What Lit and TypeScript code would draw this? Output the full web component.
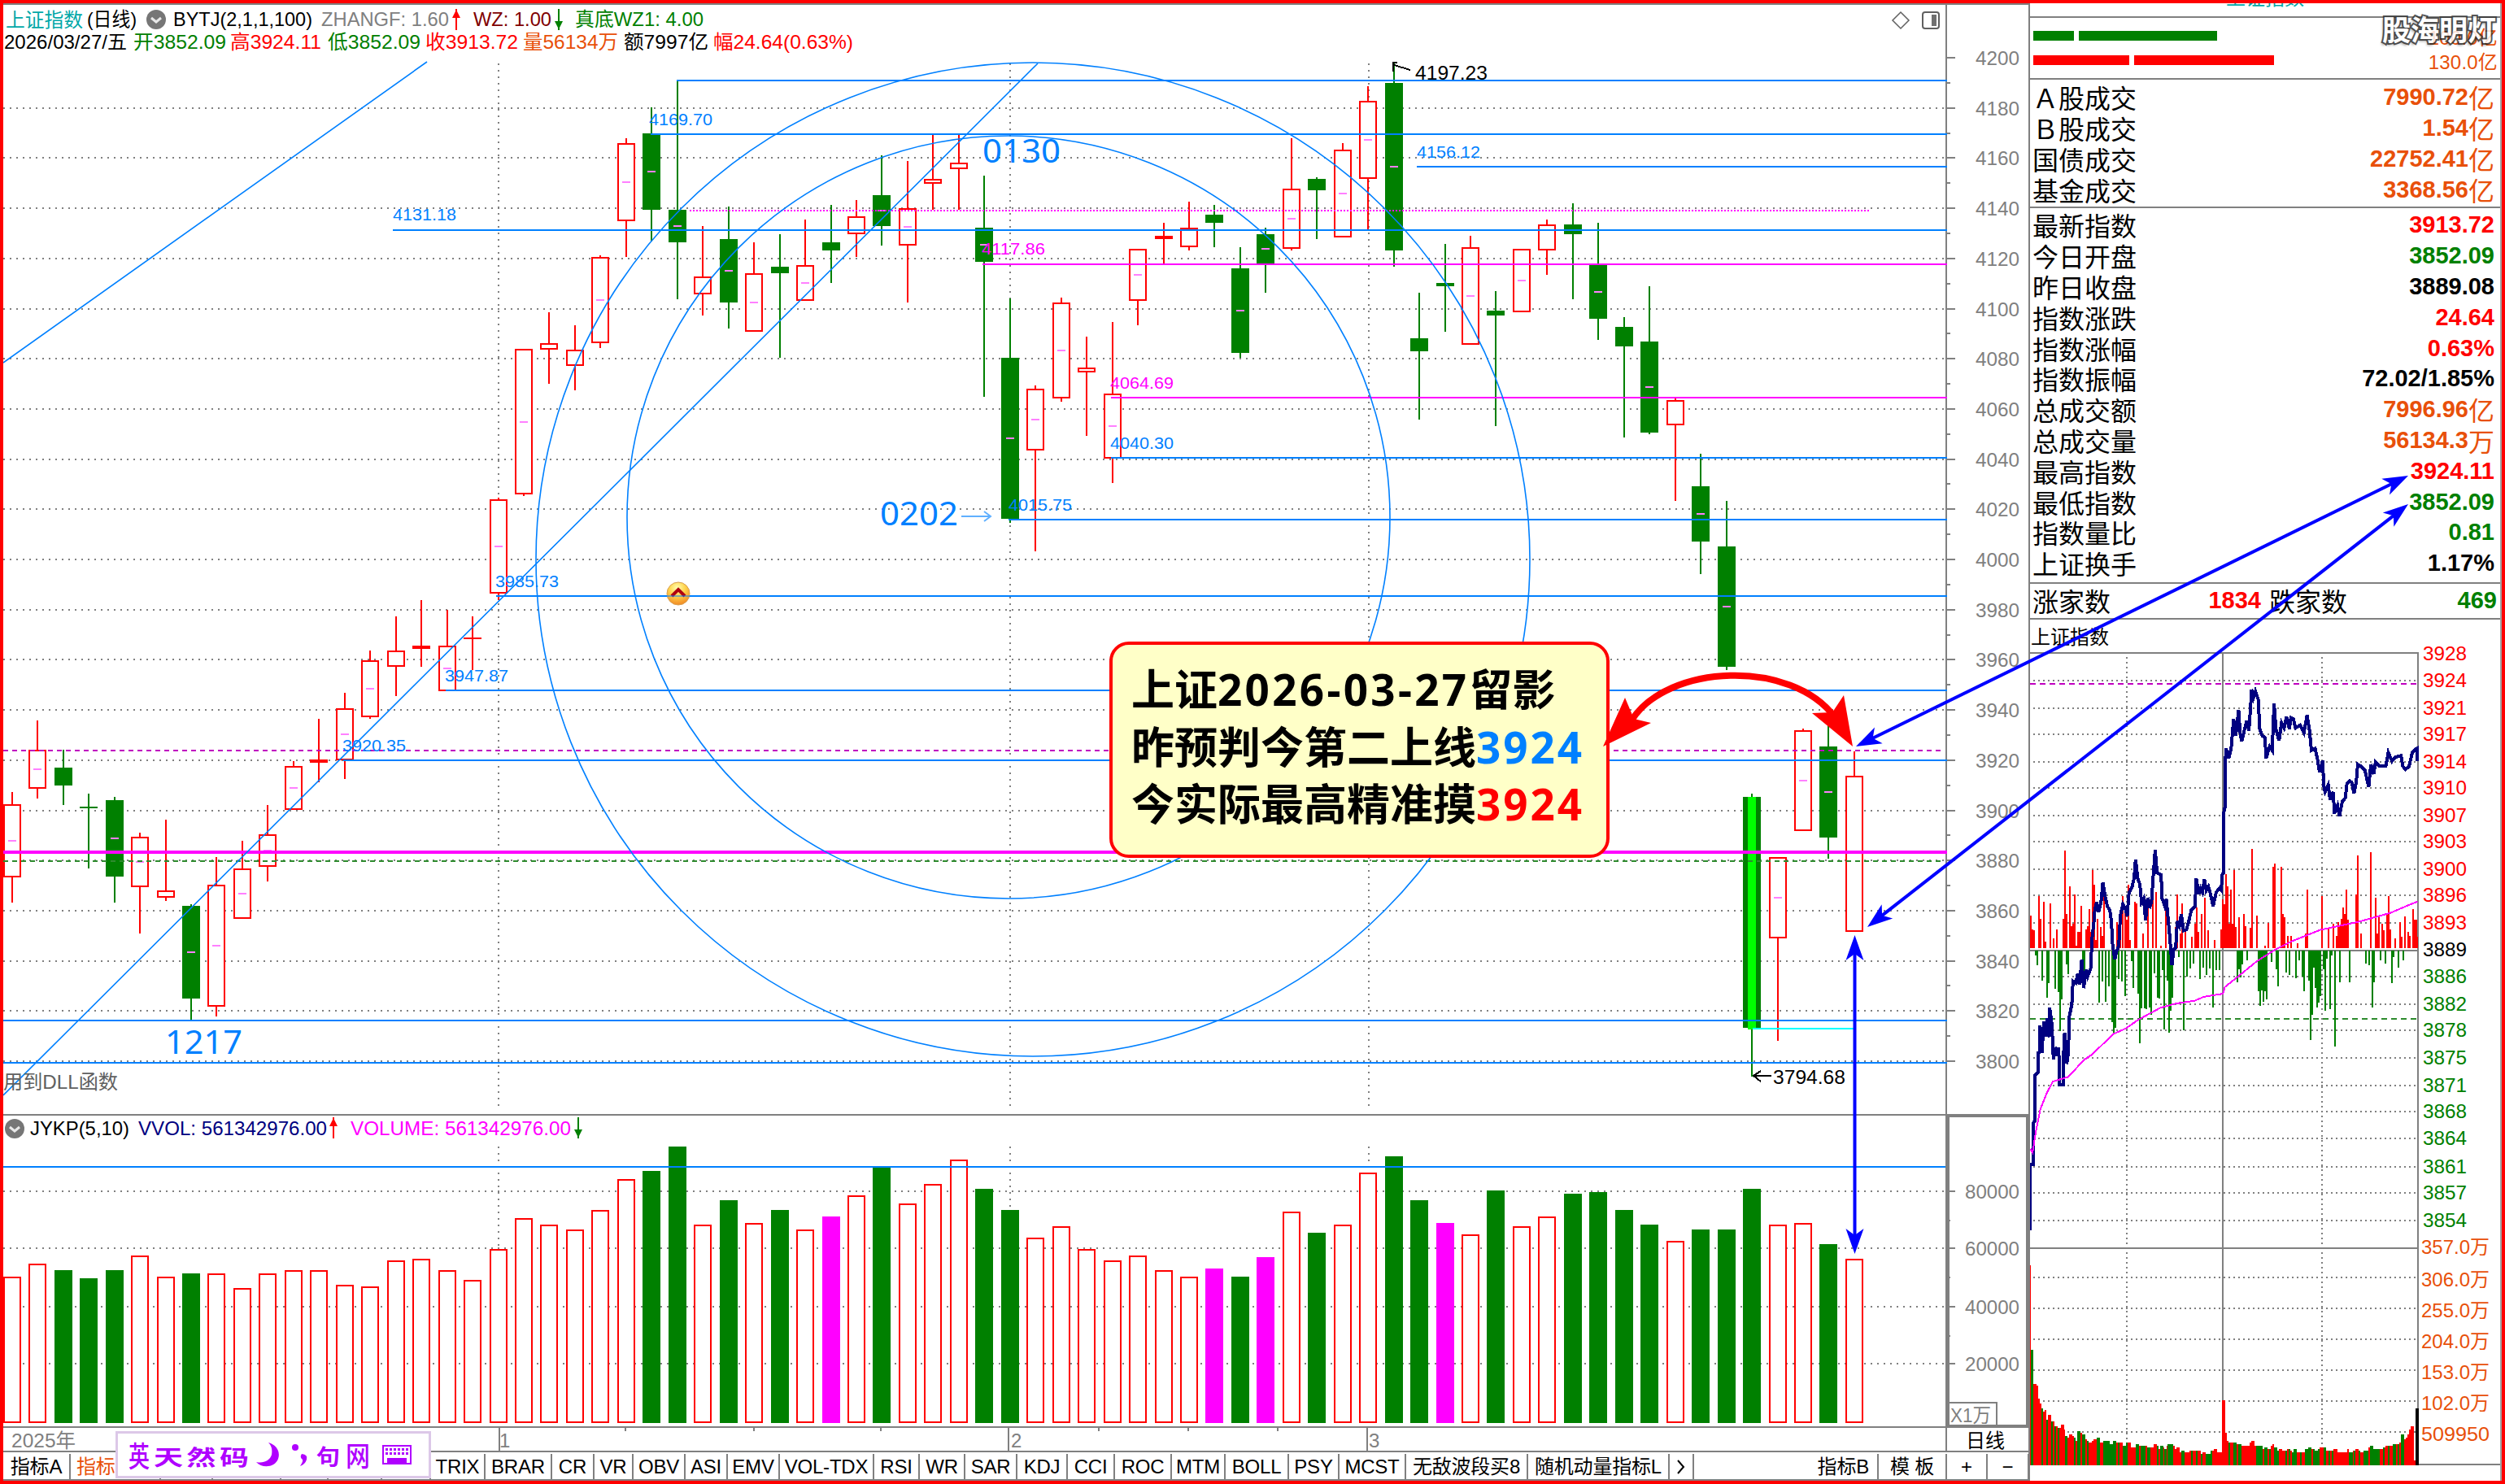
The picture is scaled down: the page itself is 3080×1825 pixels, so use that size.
import { LitElement, css, html, svg } from "lit";
import { customElement } from "lit/decorators.js";

type Candle = [top: number, bottom: number, high: number, low: number, kind: string];
type Bar = [top: number, kind: string];
type Point = [x: number, y: number];

const RED = "#ff0000";
const GREEN = "#008000";
const BLUE = "#0080ff";
const PINK = "#ff00ff";
const GRAY = "#808080";
const COLORS: Record<string, string> = { R: RED, G: GREEN, M: PINK };

const FIRST_X = 15.3;
const PITCH = 31.46;

// candle body top/bottom, wick high/low; R = up, G = down, L = marked down day
const CANDLES: Candle[] = [
  [989, 1079, 974, 1110, "R"], [922, 970, 886, 982, "R"], [944, 966, 922, 990, "G"],
  [992, 994, 976, 1068, "G"], [984, 1078, 980, 1110, "G"], [1029, 1091, 1024, 1148, "R"],
  [1095, 1104, 1008, 1108, "R"], [1114, 1228, 1112, 1254, "G"], [1088, 1238, 1054, 1250, "R"],
  [1068, 1130, 1034, 1130, "R"], [1026, 1066, 990, 1084, "R"], [942, 996, 936, 996, "R"],
  [934, 938, 884, 962, "R"], [871, 935, 852, 958, "R"], [812, 882, 800, 884, "R"],
  [800, 820, 758, 856, "R"], [794, 798, 738, 820, "R"], [794, 850, 750, 850, "R"],
  [784, 786, 758, 824, "R"], [614, 730, 612, 738, "R"], [429, 608, 429, 610, "R"],
  [422, 430, 384, 472, "R"], [430, 450, 400, 480, "R"], [316, 422, 314, 428, "R"],
  [176, 272, 170, 316, "R"], [164, 258, 132, 297, "G"], [258, 298, 99, 368, "G"],
  [340, 362, 278, 388, "R"], [294, 372, 254, 404, "G"], [336, 408, 298, 408, "R"],
  [328, 336, 288, 440, "G"], [326, 370, 270, 370, "R"], [298, 308, 252, 348, "G"],
  [266, 288, 246, 316, "R"], [240, 278, 191, 302, "G"], [256, 302, 198, 372, "R"],
  [220, 226, 165, 258, "R"], [200, 208, 165, 258, "R"], [280, 322, 216, 488, "G"],
  [440, 638, 367, 643, "G"], [478, 554, 474, 678, "R"], [372, 490, 366, 494, "R"],
  [452, 458, 414, 536, "R"], [484, 564, 396, 594, "R"], [306, 370, 306, 400, "R"],
  [290, 294, 274, 325, "R"], [280, 304, 248, 308, "R"], [264, 274, 252, 304, "G"],
  [330, 434, 304, 440, "G"], [288, 324, 280, 360, "G"], [232, 306, 170, 308, "R"],
  [220, 234, 218, 294, "G"], [184, 292, 176, 292, "R"], [124, 220, 106, 283, "R"],
  [102, 308, 78, 328, "G"], [416, 432, 360, 516, "G"], [348, 352, 300, 408, "G"],
  [304, 424, 290, 424, "R"], [382, 388, 358, 524, "G"], [306, 384, 306, 384, "R"],
  [276, 308, 270, 338, "R"], [276, 288, 250, 368, "G"], [325, 392, 274, 418, "G"],
  [402, 426, 390, 538, "G"], [420, 532, 352, 534, "G"], [492, 523, 489, 616, "R"],
  [598, 666, 558, 706, "G"], [672, 820, 616, 824, "G"], [980, 1264, 976, 1324, "L"],
  [1054, 1154, 1054, 1280, "R"], [898, 1022, 896, 1022, "R"], [918, 1030, 889, 1056, "G"],
  [954, 1146, 924, 1146, "N"],
];

const VOLUMES: Bar[] = [
  [1570, "R"], [1554, "R"], [1562, "G"], [1572, "G"], [1562, "G"], [1544, "R"], [1570, "R"],
  [1566, "G"], [1566, "R"], [1584, "R"], [1566, "R"], [1562, "R"], [1562, "R"], [1580, "R"],
  [1582, "R"], [1550, "R"], [1548, "R"], [1562, "R"], [1574, "R"], [1536, "R"], [1498, "R"],
  [1506, "R"], [1512, "R"], [1488, "R"], [1450, "R"], [1440, "G"], [1410, "G"], [1506, "R"],
  [1476, "G"], [1504, "R"], [1488, "G"], [1512, "R"], [1496, "M"], [1470, "R"], [1436, "G"],
  [1480, "R"], [1456, "R"], [1426, "R"], [1462, "G"], [1488, "G"], [1522, "R"], [1508, "R"],
  [1536, "R"], [1550, "R"], [1544, "R"], [1562, "R"], [1570, "R"], [1560, "M"], [1570, "G"],
  [1546, "M"], [1490, "R"], [1516, "G"], [1506, "R"], [1442, "R"], [1422, "G"], [1476, "G"],
  [1504, "M"], [1518, "R"], [1464, "G"], [1508, "R"], [1496, "R"], [1468, "G"], [1466, "G"],
  [1488, "G"], [1506, "G"], [1526, "R"], [1512, "G"], [1512, "G"], [1462, "G"], [1506, "R"],
  [1504, "R"], [1530, "G"], [1548, "R"],
];

// label, left edge of the tab
const TABS: [string, number, string?][] = [
  ["指标A", 4], ["指标", 87, "hot"], ["", 198], ["", 262], ["", 346], ["", 404],
  ["", 470], ["TRIX", 530], ["BRAR", 597], ["CR", 679], ["VR", 731], ["OBV", 779],
  ["ASI", 843], ["EMV", 895], ["VOL-TDX", 959], ["RSI", 1075], ["WR", 1131], ["SAR", 1187],
  ["KDJ", 1251], ["CCI", 1313], ["ROC", 1371], ["MTM", 1441], ["BOLL", 1507], ["PSY", 1585],
  ["MCST", 1647], ["无敌波段买8", 1729], ["随机动量指标L", 1879], ["", 2053, "more"],
  ["指标B", 2083, "end"], ["模 板", 2310], ["+", 2394], ["−", 2444],
];
const TABS_END = 2495;

const TURNOVER: [string, string, string][] = [
  ["Ａ股成交", "7990.72", "亿"], ["Ｂ股成交", "1.54", "亿"],
  ["国债成交", "22752.41", "亿"], ["基金成交", "3368.56", "亿"],
];

const QUOTES: [string, string, string, string?][] = [
  ["最新指数", "3913.72", "up"], ["今日开盘", "3852.09", "down"], ["昨日收盘", "3889.08", ""],
  ["指数涨跌", "24.64", "up"], ["指数涨幅", "0.63%", "up"], ["指数振幅", "72.02/1.85%", ""],
  ["总成交额", "7996.96", "amount", "亿"], ["总成交量", "56134.3", "amount", "万"],
  ["最高指数", "3924.11", "up"], ["最低指数", "3852.09", "down"],
  ["指数量比", "0.81", "down"], ["上证换手", "1.17%", ""],
];

const INTRADAY_AXIS: [number, number][] = [
  [3928, 804], [3924, 837], [3921, 871], [3917, 903], [3914, 937], [3910, 969], [3907, 1003],
  [3903, 1035], [3900, 1069], [3896, 1101], [3893, 1135], [3889, 1168], [3886, 1201],
  [3882, 1235], [3878, 1267], [3875, 1301], [3871, 1335], [3868, 1367], [3864, 1400],
  [3861, 1435], [3857, 1467], [3854, 1501],
];

const INTRADAY_VOL_AXIS: [string, number][] = [
  ["357.0万", 1533], ["306.0万", 1573], ["255.0万", 1611], ["204.0万", 1649],
  ["153.0万", 1687], ["102.0万", 1725], ["509950", 1763],
];

const parse = (s: string): Point[] =>
  s.trim().split(/\s+/).map((p) => p.split(",").map(Number) as Point);

// intraday series are kept in their own units and scaled in one group
const INTRADAY_SCALE = "translate(2480 780) scale(0.38265 0.4847)";

const PRICE_LINE = `43,1512 43,1345 52,1345 52,1240 57,1235 57,1120 67,1112 68,1062 74,1060 74,992 80,1062
  86,982 95,1020 97,975 104,1022 105,948 112,990 117,1078 124,1048 132,1070 134,1048 137,1143 148,1143
  148,1095 153,1012 160,1090 165,1060 168,970 176,940 180,880 190,885 194,862 202,888 205,855 208,825
  214,898 222,850 227,868 238,845 240,780 247,730 250,700 256,680 262,705 270,680 276,630 282,660
  290,690 298,700 303,725 307,785 314,825 320,805 327,790 332,715 340,685 348,695 354,715 360,655
  370,640 376,620 381,572 388,620 395,635 400,680 407,670 413,725 420,668 425,695 432,680 437,622
  444,547 450,605 463,610 466,670 475,690 480,672 484,710 490,760 498,840 503,800 510,795 515,728
  522,740 528,710 535,752 544,750 552,728 560,700 572,690 576,620 584,660 590,645 596,655 602,622
  608,650 615,640 622,660 630,690 640,655 650,645 656,650 660,608 664,605 665,450 668,440 669,325
  672,290 680,315 688,290 696,215 703,258 712,192 717,250 722,272 730,245 738,220 745,245 750,190
  754,140 760,160 766,145 775,165 780,240 788,258 797,262 800,315 812,285 820,295 826,175 832,240
  842,270 850,225 858,238 866,210 875,240 880,212 888,215 895,238 910,230 922,250 932,205 940,245
  946,295 958,290 965,315 972,350 982,320 986,385 990,400 1000,383 1006,420 1016,400 1020,455
  1030,435 1036,462 1045,425 1055,415 1060,380 1068,372 1075,375 1083,403 1090,375 1095,330
  1105,335 1118,345 1130,388 1137,330 1146,355 1152,325 1165,335 1185,335 1193,300 1205,322
  1215,312 1234,308 1240,335 1248,343 1260,335 1270,300 1280,292 1285,290 1287,322`;

const AVERAGE_LINE = `43,1305 50,1315 60,1265 75,1205 95,1165 115,1135 165,1123 215,1080 240,1067 310,1014
  350,1000 390,978 460,948 510,937 570,930 600,920 662,912 668,895 700,875 770,830 830,800 880,780
  975,750 1095,730 1200,707 1250,690 1287,678`;

const UP_BARS = parse(`44,714 49,748 54,752 70,664 75,722 86,678 91,780 107,682 117,772 128,748 149,722
  154,549 159,710 169,640 175,740 180,735 185,660 190,790 195,755 201,755 206,690 222,748 227,740
  232,698 237,755 242,598 248,635 253,775 258,722 268,742 274,765 279,660 321,730 331,745 341,664
  347,690 352,725 358,635 363,775 378,678 384,682 405,760 420,678 436,650 446,655 462,790 478,700
  509,743 514,660 524,760 530,682 540,755 561,768 572,735 578,694 583,755 593,710 603,668 614,752
  635,776 656,748 661,672 666,685 671,608 676,640 682,735 687,648 692,735 697,598 702,743 713,718
  729,710 734,740 750,745 755,545 771,714 797,790 808,732 823,590 828,582 849,590 854,710 859,718
  870,765 880,765 902,785 928,760 933,648 980,664 1001,745 1016,735 1027,765 1032,730 1037,740
  1042,722 1048,694 1053,710 1058,648 1063,725 1090,660 1095,561 1105,760 1136,553 1152,668
  1157,760 1162,715 1173,735 1178,752 1188,710 1194,664 1199,748 1215,772 1230,730 1235,768
  1246,715 1256,755 1262,765 1272,698 1277,725 1282,725 1287,768`);

const DOWN_BARS = parse(`60,815 65,840 81,878 96,922 102,885 123,900 133,908 138,1007 143,927 160,838
  165,862 211,870 216,880 264,935 274,880 284,932 295,893 306,985 311,1010 316,998 326,875 337,880
  347,918 368,830 373,898 389,912 394,1038 399,950 410,950 415,952 425,948 431,965 441,860 452,922
  457,925 468,852 473,1002 483,878 488,1010 493,955 499,922 520,820 535,1005 546,868 556,848
  567,835 588,875 598,845 608,865 619,848 629,948 640,852 650,852 708,882 713,850 718,870 724,838
  740,828 776,905 781,943 786,903 791,932 797,905 802,927 817,832 833,850 838,893 865,858 875,865
  896,872 907,828 917,868 922,906 938,878 943,1030 948,965 953,845 959,898 964,948 969,935 974,918
  985,850 990,956 995,823 1006,952 1011,815 1021,1046 1037,882 1069,882 1121,835 1131,840
  1142,948 1147,882 1168,828 1183,835 1204,886 1209,820 1225,845 1241,828`);

// minute volume outline, third value 1 marks a falling stretch, 2 the closing auction
const MINUTE_VOLUME = `42,228,0 45,540,1 52,665,0 62,672,0 68,720,0 73,738,0 78,756,1 83,768,0 88,780,1
  90,762,0 94,798,1 99,780,0 109,804,1 115,804,0 120,822,1 125,822,0 130,828,1 136,828,0 141,816,0
  151,833,0 154,858,1 162,864,0 167,852,0 177,858,0 182,864,1 188,876,0 193,840,1 203,846,0
  209,852,1 220,870,0 225,876,1 230,882,0 240,876,0 246,870,0 256,864,1 266,882,0 277,876,1
  298,888,1 308,876,1 318,882,0 324,882,1 329,882,0 340,894,1 350,882,1 356,882,0 366,900,0
  382,888,1 392,894,0 398,894,1 413,894,0 418,900,1 429,900,0 439,888,0 449,894,1 455,906,0
  460,894,1 470,900,0 474,906,1 480,894,0 484,888,1 501,894,0 507,906,0 513,900,0 523,918,0
  528,912,1 538,918,0 554,912,0 560,912,1 565,912,0 575,912,1 580,912,0 590,924,1 596,918,0
  606,924,1 622,912,1 628,912,0 632,906,0 643,918,0 659,726,0 669,846,0 674,876,0 680,882,1
  686,882,0 695,882,1 706,888,0 711,888,1 722,894,0 748,882,0 753,876,0 763,894,0 768,894,1
  790,906,0 794,900,1 805,906,0 810,906,1 815,894,0 821,888,0 826,900,1 836,912,1 842,906,0
  852,912,0 862,912,1 868,906,0 873,906,1 878,912,0 883,918,1 889,906,1 899,918,0 909,918,1
  915,918,0 925,906,1 935,900,1 946,906,0 951,906,1 956,912,1 967,906,1 972,900,0 984,900,1
  993,912,0 1000,912,1 1006,912,0 1011,912,1 1016,906,0 1030,918,0 1061,906,0 1066,918,1
  1080,912,0 1082,912,1 1087,906,0 1098,912,1 1103,918,0 1114,912,1 1129,900,0 1134,894,1
  1145,906,1 1165,906,0 1175,900,1 1181,900,0 1185,894,0 1191,894,1 1196,894,0 1207,888,1
  1217,888,0 1223,888,1 1228,882,0 1233,852,1 1243,870,0 1249,864,0 1254,852,0 1259,834,0
  1265,822,0 1275,948,0 1281,756,2 1291,965,0`
  .trim().split(/\s+/).map((p) => p.split(",").map(Number));

const text = (
  x: number, y: number, s: string, fill: string, length?: number, size = 24, anchor = "start",
) => length
  ? svg`<text x=${x} y=${y} fill=${fill} font-size=${size} text-anchor=${anchor}
      textLength=${length} lengthAdjust="spacingAndGlyphs">${s}</text>`
  : svg`<text x=${x} y=${y} fill=${fill} font-size=${size} text-anchor=${anchor}>${s}</text>`;

const hline = (y: number, x1: number, x2: number, stroke: string, width = 2, dash = "none") =>
  svg`<line x1=${x1} x2=${x2} y1=${y} y2=${y} stroke=${stroke} stroke-width=${width} stroke-dasharray=${dash} />`;

const vline = (x: number, y1: number, y2: number, stroke: string, width = 2, dash = "none") =>
  svg`<line x1=${x} x2=${x} y1=${y1} y2=${y2} stroke=${stroke} stroke-width=${width} stroke-dasharray=${dash} />`;

const trend = (x: number, y: number, up: boolean) => {
  const color = up ? RED : GREEN;
  const tip = up ? y - 9 : y + 9;
  const base = up ? y - 2 : y + 2;
  return svg`
    ${vline(x, y - 13, y + 13, color)}
    <path d="M${x} ${up ? tip - 3 : tip + 3}L${x - 5} ${base}H${x + 5}Z" fill=${color} />`;
};

const badge = (x: number, y: number) => svg`
  <circle cx=${x} cy=${y} r="12" fill="#767676" />
  <path d="M${x - 6} ${y - 2}l6 5l6 -5" fill="none" stroke="#e8e8e8" stroke-width="3" />`;

// double-headed straight arrow with swept-back barbs
const arrow = (x1: number, y1: number, x2: number, y2: number) => {
  const angle = (Math.atan2(y2 - y1, x2 - x1) * 180) / Math.PI;
  const head = "M0 0L-31 -11L-23 0L-31 11Z";
  return svg`
    <g fill="#0000ff">
      <line x1=${x1} y1=${y1} x2=${x2} y2=${y2} stroke="#0000ff" stroke-width="4"
        stroke-dasharray=${`${Math.hypot(x2 - x1, y2 - y1) - 36} 100`} stroke-dashoffset="-18" />
      <path d=${head} transform=${`translate(${x2} ${y2}) rotate(${angle})`} />
      <path d=${head} transform=${`translate(${x1} ${y1}) rotate(${angle + 180})`} />
    </g>`;
};

@customElement("kline-chart")
export class KlineChart extends LitElement {
  static override styles = css`
    :host {
      display: block;
      height: 1364px;
    }
    svg {
      display: block;
      font-family: "Liberation Sans", "Noto Sans CJK SC", sans-serif;
    }
    .note {
      font-family: "Noto Sans", "Noto Sans CJK SC", sans-serif;
    }
  `;

  private candle([top, bottom, high, low, kind]: Candle, i: number) {
    const x = Math.floor(FIRST_X + i * PITCH);
    const height = bottom - top;
    const marked = height > 35 && kind !== "L" && kind !== "N";
    const mark = marked
      ? svg`<rect x=${x - 5} y=${(top + bottom) / 2 - 1} width="10" height="2" fill="#ff80ff" />`
      : "";
    if (kind === "G" || kind === "L") {
      return svg`
        ${vline(x, high, low, GREEN)}
        <rect x=${x - 11} y=${top} width="22" height=${height} fill=${GREEN} />
        ${kind === "L" ? svg`<rect x=${x - 5} y=${top} width="10" height=${height + 2} fill="#00ff00" />` : ""}
        ${mark}`;
    }
    return svg`
      ${vline(x, high, low, RED)}
      ${height <= 4
        ? svg`<rect x=${x - 11} y=${top} width="22" height=${height} fill=${RED} />`
        : svg`<rect x=${x - 10} y=${top + 1} width="20" height=${height - 2} fill="#fff" stroke=${RED} stroke-width="2" />`}
      ${mark}`;
  }

  private axis() {
    const ticks = [];
    for (let p = 4200; p >= 3800; p -= 10) {
      const y = Math.round(71 + (4200 - p) * 3.085);
      const major = p % 20 === 0;
      ticks.push(hline(y, 2394, major ? 2404 : 2398, GRAY));
      if (major) {
        ticks.push(text(2429, y + 9, String(p), GRAY, 54));
        if (p < 4200) ticks.push(hline(y, 4, 2394, GRAY, 2, "2 6"));
      }
    }
    return ticks;
  }

  private header() {
    return svg`
      ${text(7, 33, "上证指数", "#00a8a8", 95)}
      ${text(107, 32, "(日线)", "#000", 61)}
      ${badge(192, 24)}
      ${text(213, 32, "BYTJ(2,1,1,100)", "#000", 171)}
      ${text(395, 32, "ZHANGF: 1.60", GRAY, 157)}
      ${trend(561, 24, true)}
      ${text(582, 32, "WZ: 1.00", "#800000", 96)}
      ${trend(687, 24, false)}
      ${text(707, 32, "真底WZ1: 4.00", GREEN, 158)}
      ${text(5, 60, "2026/03/27/五", "#000", 151)}
      ${text(164, 60, "开3852.09", GREEN, 114)}
      ${text(283, 60, "高3924.11", RED, 112)}
      ${text(403, 60, "低3852.09", GREEN, 114)}
      ${text(523, 60, "收3913.72", RED, 114)}
      ${text(643, 60, "量56134万", "#e8500a", 117)}
      ${text(767, 60, "额7997亿", "#000", 104)}
      ${text(877, 60, "幅24.64(0.63%)", RED, 172)}
      <path d="M2337 15l10 10l-10 10l-10 -10z" fill="none" stroke="#606060" stroke-width="1.5" />
      <rect x="2364" y="15" width="20" height="20" rx="3" fill="none" stroke="#606060" stroke-width="2" />
      <rect x="2375" y="18" width="6" height="14" fill="#707070" />`;
  }

  private levels() {
    return svg`
      ${hline(259, 848, 2298, PINK, 2, "2 2")}
      ${hline(923, 4, 2390, "#c000c0", 2, "6 5")}
      ${hline(1059, 4, 2390, "#2e8b2e", 2, "6 5")}
      ${hline(1048, 4, 2394, PINK, 4)}
      ${[[99, 832], [165, 800], [283, 483], [205, 1742], [563, 1366], [639, 1240], [733, 610],
        [849, 548], [935, 422], [1255, 4], [1307, 4]].map(([y, x]) => hline(y, x, 2394, BLUE))}
      ${hline(325, 1208, 2394, PINK)}
      ${hline(489, 1366, 2394, PINK)}
      ${hline(1265, 2155, 2280, "#00ffff")}
      ${text(483, 271, "4131.18", BLUE, 78, 21)}
      ${text(798, 154, "4169.70", BLUE, 78, 21)}
      ${text(1742, 194, "4156.12", BLUE, 78, 21)}
      ${text(1207, 313, "4117.86", PINK, 78, 21)}
      ${text(1365, 478, "4064.69", PINK, 78, 21)}
      ${text(1365, 552, "4040.30", BLUE, 78, 21)}
      ${text(1240, 628, "4015.75", BLUE, 78, 21)}
      ${text(609, 722, "3985.73", BLUE, 78, 21)}
      ${text(547, 838, "3947.87", BLUE, 78, 21)}
      ${text(421, 924, "3920.35", BLUE, 78, 21)}
      ${text(1740, 98, "4197.23", "#000", 89)}
      ${text(2180, 1333, "3794.68", "#000", 89)}
      <path d="M1713 88V77H1718M1714 80L1734 86M2165 1317L2156 1323L2165 1330M2156 1323H2178" fill="none" stroke="#000" stroke-width="2" />`;
  }

  override render() {
    return html`
      <svg viewBox="4 6 2490 1364" width="2490" height="1364">
        <g shape-rendering="crispEdges">
          ${this.axis()}
          ${[613, 1242, 1683].map((x) => vline(x, 78, 1364, GRAY, 2, "2 6"))}
          ${vline(2393, 6, 1370, GRAY)}
          ${CANDLES.map((c, i) => this.candle(c, i))}
          ${this.levels()}
        </g>
        <g fill="none" stroke=${BLUE} stroke-width="1.6">
          <circle cx="1270" cy="688" r="611" />
          <circle cx="1240" cy="636" r="469" />
          <path d="M4 446L525 76M4 1347L1276 78" />
        </g>
        ${this.header()}
        <g class="note">
          ${text(1082, 646, "0202", BLUE, 96, 40)}
          ${text(1208, 200, "0130", BLUE, 96, 40)}
          ${text(203, 1296, "1217", BLUE, 95, 40)}
          <path d="M1182 635H1217M1210 629L1218 635L1210 641" fill="none" stroke="#60b0ff" stroke-width="2" />
        </g>
        ${text(4, 1339, "用到DLL函数", "#606060", 141)}
        <defs>
          <radialGradient id="ball" cx="0.45" cy="0.25" r="0.8">
            <stop offset="0" stop-color="#ffffb0" />
            <stop offset="0.45" stop-color="#ffd24a" />
            <stop offset="1" stop-color="#f08020" />
          </radialGradient>
        </defs>
        <circle cx="834" cy="730" r="14" fill="url(#ball)" stroke="#d8a050" />
        <path d="M826 733L834 725L842 733" fill="none" stroke="#b00010" stroke-width="4" />
        ${hline(733, 820, 848, BLUE, 1)}
      </svg>
    `;
  }
}

@customElement("volume-chart")
export class VolumeChart extends LitElement {
  static override styles = css`
    :host {
      display: block;
      height: 416px;
    }
    svg {
      display: block;
      font-family: "Liberation Sans", "Noto Sans CJK SC", sans-serif;
    }
  `;

  override render() {
    return html`
      <svg viewBox="4 1370 2490 416" width="2490" height="416">
        <g shape-rendering="crispEdges">
          ${[1465, 1535, 1607, 1677].map((y, i) => svg`
            ${hline(y, 4, 2394, GRAY, 2, "2 6")}
            ${hline(y, 2394, 2404, GRAY)}
            ${text(2416, y + 9, String(80000 - i * 20000), GRAY, 67)}`)}
          ${[1501, 1571, 1643].map((y) => hline(y, 2394, 2398, GRAY))}
          ${[613, 1242, 1683].map((x) => vline(x, 1410, 1750, GRAY, 2, "2 6"))}
          ${VOLUMES.map(([top, kind], i) => {
            const x = Math.floor(FIRST_X + i * PITCH);
            return kind === "R"
              ? svg`<rect x=${x - 10} y=${top + 1} width="20" height=${1748 - top} fill="#fff" stroke=${RED} stroke-width="2" />`
              : svg`<rect x=${x - 11} y=${top} width="22" height=${1750 - top} fill=${COLORS[kind]} />`;
          })}
          ${hline(1435, 4, 2394, BLUE)}
          ${hline(1371, 4, 2394, GRAY)}
          ${hline(1755, 4, 2394, GRAY)}
          ${hline(1785, 4, 2494, GRAY)}
          <rect x="2395" y="1372" width="98" height="382" fill="none" stroke=${GRAY} stroke-width="4" />
          <rect x="2396" y="1725" width="59" height="28" fill="none" stroke=${GRAY} stroke-width="2" />
          ${vline(2393, 1370, 1786, GRAY)}
          ${[614, 1240, 1681].map((x) => vline(x, 1756, 1785, GRAY))}
          ${[769, 927, 1083, 1351, 1461, 1571].map((x) => vline(x, 1756, 1760, GRAY))}
        </g>
        ${badge(18, 1388)}
        ${text(37, 1396, "JYKP(5,10)", "#000", 122)}
        ${text(170, 1396, "VVOL: 561342976.00", "#000080", 232)}
        ${trend(410, 1387, true)}
        ${text(431, 1396, "VOLUME: 561342976.00", PINK, 271)}
        ${trend(711, 1387, false)}
        ${text(2398, 1749, "X1万", GRAY, 50)}
        ${text(14, 1780, "2025年", GRAY, 79)}
        ${text(614, 1780, "1", GRAY)}
        ${text(1243, 1780, "2", GRAY)}
        ${text(1683, 1780, "3", GRAY)}
        ${text(2417, 1780, "日线", "#000", 48)}
      </svg>
    `;
  }
}

@customElement("indicator-tabs")
export class IndicatorTabs extends LitElement {
  static override styles = css`
    :host {
      display: flex;
      height: 33px;
      margin-top: 2px;
      border-bottom: 2px solid #808080;
      box-sizing: border-box;
      overflow: hidden;
      font: 24px/31px "Liberation Sans", "Noto Sans CJK SC", sans-serif;
    }
    .tab {
      box-sizing: border-box;
      flex: none;
      border-right: 2px solid #808080;
      text-align: center;
      white-space: nowrap;
      overflow: hidden;
      letter-spacing: -0.2px;
    }
    .hot {
      color: #e8500a;
      text-align: left;
      padding-left: 7px;
    }
    .end {
      text-align: right;
      padding-right: 10px;
    }
    .more svg {
      display: block;
      margin: 7px auto 0;
    }
  `;

  override render() {
    return TABS.map(([label, left, kind], i) => {
      const right = TABS[i + 1]?.[1] ?? TABS_END;
      return html`<div class="tab ${kind ?? ""}" style="width:${right - left}px">
        ${kind === "more"
          ? html`<svg width="10" height="18" viewBox="0 0 10 18"><path d="M1 1l7 8l-7 8" fill="none" stroke="#000" stroke-width="2" /></svg>`
          : label}
      </div>`;
    });
  }
}

@customElement("intraday-chart")
export class IntradayChart extends LitElement {
  static override styles = css`
    :host {
      display: block;
    }
    svg {
      display: block;
      font-family: "Liberation Sans", "Noto Sans CJK SC", sans-serif;
    }
    polyline {
      fill: none;
      vector-effect: non-scaling-stroke;
    }
  `;

  override render() {
    const fills = [RED, GREEN, "#000"];
    return html`
      <svg viewBox="2496 762 578 1059" width="578" height="1059">
        <g shape-rendering="crispEdges">
          ${INTRADAY_AXIS.slice(1).filter(([p]) => p !== 3889).map(([, y]) => hline(y, 2500, 2972, GRAY, 2, "2 4"))}
          ${[1571, 1609, 1647, 1685, 1723, 1761].map((y) => hline(y, 2500, 2972, GRAY, 2, "2 4"))}
          ${[2615, 2855].map((x) => svg`
            ${vline(x, 808, 1532, GRAY, 2, "2 4")}
            ${vline(x, 1540, 1800, GRAY, 2, "2 4")}`)}
          ${hline(803, 2496, 2974, GRAY)}
          ${hline(1535, 2496, 2974, GRAY)}
          ${hline(1169, 2496, 2974, GRAY)}
          ${vline(2733, 803, 1801, GRAY)}
          ${vline(2973, 803, 1801, GRAY)}
          ${hline(841, 2496, 2972, "#c000c0", 2, "7 5")}
          ${hline(1253, 2496, 2972, "#2e8b2e", 2, "7 5")}
          <g transform=${INTRADAY_SCALE}>
            ${UP_BARS.map(([x, y]) => svg`<rect x=${x - 2.6} y=${y} width="5.2" height=${797 - y} fill=${RED} />`)}
            ${DOWN_BARS.map(([x, y]) => svg`<rect x=${x - 2.6} y="802" width="5.2" height=${y - 802} fill=${GREEN} />`)}
            <polyline points=${PRICE_LINE} stroke="#000080" stroke-width="4" />
            <polyline points=${AVERAGE_LINE} stroke=${PINK} stroke-width="2" />
          </g>
          ${MINUTE_VOLUME.slice(0, -1).map(([x, top, kind], i) => svg`
            <rect x=${2480 + x * 0.38265} y=${1480 + top / 3}
              width=${(MINUTE_VOLUME[i + 1][0] - x) * 0.38265} height=${(965 - top) / 3} fill=${fills[kind]} />`)}
          ${hline(1801, 2974, 3074, GRAY)}
        </g>
        ${text(2497, 792, "上证指数", "#000", 96)}
        ${INTRADAY_AXIS.map(([p, y]) =>
          text(2979, y + 8, String(p), p > 3889 ? RED : p < 3889 ? GREEN : "#000", 54))}
        ${INTRADAY_VOL_AXIS.map(([label, y]) =>
          text(2977, y + 9, label, "#e8500a", 84))}
      </svg>
    `;
  }
}

@customElement("quote-panel")
export class QuotePanel extends LitElement {
  static override styles = css`
    :host {
      display: flex;
      flex-direction: column;
      font: bold 29px "Liberation Sans", sans-serif;
      color: #000;
    }
    .title {
      height: 18px;
      border-bottom: 2px solid #808080;
      box-sizing: border-box;
      overflow: hidden;
      font: 24px/24px "Noto Sans CJK SC", sans-serif;
      color: #00a8a8;
      text-align: center;
    }
    .title span {
      display: block;
      margin-top: -20px;
    }
    .flow {
      box-sizing: border-box;
      height: 76px;
      border-bottom: 2px solid #808080;
      display: flex;
      flex-direction: column;
      gap: 2px;
      padding: 8px 3px 0 4px;
    }
    .flow .line {
      display: flex;
      align-items: center;
      gap: 6px;
      height: 28px;
      font: 24px "Liberation Sans", "Noto Sans CJK SC", sans-serif;
      color: #e8500a;
    }
    .bar {
      height: 12px;
      background: #008000;
    }
    .bar.in {
      background: #ff0000;
    }
    .line span {
      margin-left: auto;
      letter-spacing: 0.2px;
    }
    .group {
      box-sizing: border-box;
      border-bottom: 2px solid #808080;
      padding: 3px 7px 0 3px;
    }
    .turnover {
      height: 158px;
    }
    .quotes {
      height: 462px;
      padding-top: 2px;
    }
    .breadth {
      height: 44px;
      padding: 2px 4px 0 3px;
      display: grid;
      grid-template-columns: 281px 1fr;
      column-gap: 10px;
    }
    .row {
      display: flex;
      align-items: center;
      justify-content: space-between;
      height: 37.8px;
    }
    .name,
    .unit {
      font: 32px/37px "Noto Sans CJK SC", sans-serif;
    }
    .up {
      color: #ff0000;
    }
    .down {
      color: #008000;
    }
    .amount {
      color: #e8500a;
    }
    .value {
      display: flex;
      align-items: center;
    }
  `;

  private row(name: string, value: string, tone: string, unit = "") {
    return html`<div class="row">
      <span class="name">${name}</span>
      <span class="value ${tone}">${value}${unit ? html`<span class="unit">${unit}</span>` : ""}</span>
    </div>`;
  }

  override render() {
    return html`
      <div class="title"><span>上证指数</span></div>
      <div class="flow">
        <div class="line">
          <div class="bar" style="width:50px"></div>
          <div class="bar" style="width:170px"></div>
          <span>100.0亿</span>
        </div>
        <div class="line">
          <div class="bar in" style="width:118px"></div>
          <div class="bar in" style="width:172px"></div>
          <span>130.0亿</span>
        </div>
      </div>
      <div class="group turnover">${TURNOVER.map(([n, v, u]) => this.row(n, v, "amount", u))}</div>
      <div class="group quotes">${QUOTES.map(([n, v, t, u]) => this.row(n, v, t, u))}</div>
      <div class="group breadth">
        ${this.row("涨家数", "1834", "up")}
        ${this.row("跌家数", "469", "down")}
      </div>
    `;
  }
}

@customElement("ime-bar")
export class ImeBar extends LitElement {
  static override styles = css`
    :host {
      display: flex;
      align-items: center;
      box-sizing: border-box;
      width: 388px;
      height: 58px;
      padding-left: 13px;
      border: 3px solid #dcc8e8;
      background: #fff;
      color: #b000ff;
      font: 500 26px/50px "Noto Sans CJK SC", sans-serif;
      white-space: nowrap;
    }
    .mode {
      width: 31px;
      transform: scaleY(1.35);
    }
    .scheme {
      width: 125px;
      font-size: 36px;
      font-weight: 700;
      letter-spacing: 4.5px;
      line-height: 36px;
      transform: scaleY(0.74);
      transform-origin: 0 60%;
    }
    svg {
      flex: none;
    }
    .sentence {
      margin-left: 9px;
      width: 37px;
      font-size: 29px;
      font-weight: 700;
      transform: scaleY(0.9);
    }
    .net {
      height: 32px;
      width: 28px;
      margin-right: 16px;
      line-height: 30px;
      font-size: 30px;
      text-indent: -1px;
      transform: scaleY(1.15);
    }
  `;

  override render() {
    const keys = [0, 1].flatMap((r) => [0, 1, 2, 3, 4, 5].map((c) => [5 + c * 5, 5 + r * 5]));
    return html`
      <span class="mode">英</span>
      <span class="scheme">天然码</span>
      <svg width="66" height="36" viewBox="0 0 66 36">
        <path d="M16 3C26 6 31 14 28 23C24 34 8 35 1 27C10 29 18 25 20 18C21 12 20 7 16 3Z" fill="#b000ff" />
        <circle cx="49" cy="9" r="4" fill="#b000ff" />
        <path d="M57 17q8 1 6 7q-2 6-8 8q4-6 3-8q-4-3-1-7z" fill="#b000ff" />
      </svg>
      <span class="sentence">句</span>
      <span class="net">网</span>
      <svg width="36" height="24" viewBox="0 0 36 24">
        <rect x="1" y="1" width="34" height="22" fill="none" stroke="#b000ff" stroke-width="2" />
        ${keys.map(([x, y]) => svg`<rect x=${x - 1} y=${y - 1} width="3" height="3" fill="#b000ff" />`)}
        <rect x="6" y="16" width="24" height="6" fill="#b000ff" />
      </svg>
    `;
  }
}

@customElement("app-root")
export class AppRoot extends LitElement {
  static override styles = css`
    :host {
      display: block;
      position: relative;
      box-sizing: border-box;
      width: 3080px;
      height: 1825px;
      border: 4px solid #ff0000;
      background: #fff;
      overflow: hidden;
    }
    .shell {
      display: grid;
      grid-template-columns: 2492px 580px;
      height: 100%;
    }
    .charts {
      box-sizing: border-box;
      border-top: 2px solid #808080;
      border-right: 2px solid #808080;
      overflow: hidden;
    }
    .side {
      box-sizing: border-box;
      border-right: 2px solid #a0a0a0;
      overflow: hidden;
    }
    .callout {
      position: absolute;
      left: 1360px;
      top: 785px;
      box-sizing: border-box;
      width: 615px;
      height: 266px;
      padding: 20px 0 0 23px;
      border: 4px solid #ff0000;
      border-radius: 24px;
      background: #ffffc8;
      color: #000;
      font: bold 53px/70px "Noto Sans", "Noto Sans CJK SC", sans-serif;
      white-space: nowrap;
    }
    .line {
      height: 70.5px;
    }
    .num {
      letter-spacing: 2.9px;
    }
    .date {
      letter-spacing: 3.3px;
    }
    .forecast {
      color: #0080ff;
    }
    .actual {
      color: #ff0000;
    }
    .arrows {
      position: absolute;
      left: -4px;
      top: -4px;
    }
    ime-bar {
      position: absolute;
      left: 138px;
      top: 1756px;
    }
    .watermark {
      position: absolute;
      right: 7px;
      top: 6px;
      font: bold 35px/50px "Noto Sans CJK SC", sans-serif;
      color: #fff;
      -webkit-text-stroke: 4px #333;
      paint-order: stroke fill;
      text-shadow: -2px 3px 3px #0006;
      opacity: 0.82;
    }
  `;

  override render() {
    return html`
      <div class="shell">
        <div class="charts">
          <kline-chart></kline-chart>
          <volume-chart></volume-chart>
          <indicator-tabs></indicator-tabs>
        </div>
        <div class="side">
          <quote-panel></quote-panel>
          <intraday-chart></intraday-chart>
        </div>
      </div>
      <div class="callout">
        <div class="line">上证<span class="date">2026-03-27</span>留影</div>
        <div class="line">昨预判今第二上线<span class="num forecast">3924</span></div>
        <div class="line">今实际最高精准摸<span class="num actual">3924</span></div>
      </div>
      <svg class="arrows" width="3080" height="1825" viewBox="0 0 3080 1825">
        <path d="M2006 886C2050 816 2203 810 2256 882" fill="none" stroke="#ff0000" stroke-width="8" />
        <path d="M1971 918L1998 858L2009 884L2030 889ZM2278 918L2267 855L2253 876L2228 877Z" fill="#ff0000" />
        ${arrow(2282, 918, 2961, 585)}
        ${arrow(2296, 1140, 2961, 620)}
        ${arrow(2280.5, 1150, 2280.5, 1542)}
      </svg>
      <ime-bar></ime-bar>
      <div class="watermark">股海明灯</div>
    `;
  }
}

declare global {
  interface HTMLElementTagNameMap {
    "app-root": AppRoot;
    "kline-chart": KlineChart;
    "volume-chart": VolumeChart;
    "indicator-tabs": IndicatorTabs;
    "intraday-chart": IntradayChart;
    "quote-panel": QuotePanel;
    "ime-bar": ImeBar;
  }
}
